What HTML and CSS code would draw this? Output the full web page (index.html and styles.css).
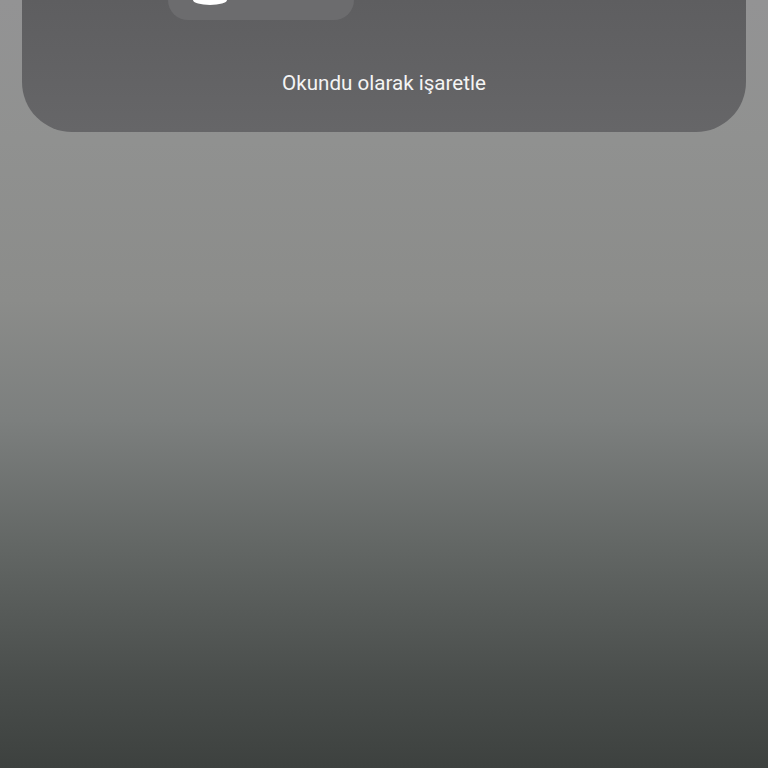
FILE: index.html
```html
<!DOCTYPE html>
<html>
<head>
<meta charset="utf-8">
<link rel="stylesheet" href="styles.css">
</head>
<body>
<div class="screen">
  <div class="panel">
    <div class="btn"><div class="blob"></div></div>
    <div class="label">Okundu olarak işaretle</div>
  </div>
</div>
</body>
</html>
```
FILE: styles.css
```css
html, body { margin: 0; padding: 0; }
body { width: 768px; height: 768px; overflow: hidden; }
.screen {
  width: 768px; height: 768px;
  background: linear-gradient(to bottom, #939394 0px, #909190 140px, #8b8c8a 300px, #7c7f7e 420px, #626664 550px, #4a4e4c 680px, #3d413f 768px);
  padding: 0 22px;
  box-sizing: border-box;
}
.panel {
  height: 132px;
  background: linear-gradient(to bottom, #5e5e60, #666668);
  border-radius: 0 0 50px 50px;
  display: flex;
  flex-direction: column;
}
.btn {
  margin-left: 146px;
  width: 186px;
  height: 20px;
  background: #6c6c6e;
  border-radius: 0 0 20px 20px;
  display: flex;
}
.blob {
  margin-left: 25px;
  width: 34px;
  height: 5px;
  background: #ffffff;
  border-radius: 0 0 17px 17px / 0 0 5px 5px;
}
.label {
  margin-top: 51px;
  text-align: center;
  font-family: Roboto, "Noto Sans", sans-serif;
  font-size: 20.6px;
  line-height: 25px;
  color: #f4f4f4;
}
```
